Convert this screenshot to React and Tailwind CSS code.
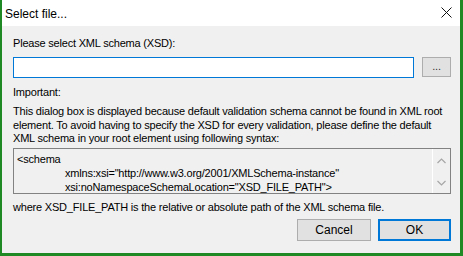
import React from "react";

export default function App() {
  return (
    <div
      className="w-[463px] h-[256px] flex flex-col bg-[#1f8a24] pl-[2px] pr-[3px] pb-[3px] text-[11px] text-black overflow-hidden tracking-[-0.2px]"
      style={{ fontFamily: '"Liberation Sans", Arial, sans-serif' }}
    >
      {/* title bar */}
      <div className="h-[26px] bg-white flex items-center justify-between pl-[3px] pr-[8px] shrink-0">
        <span className="text-[12px] leading-none pt-[1px] tracking-normal">Select file...</span>
        <svg width="11" height="11" viewBox="0 0 11 11" className="mb-[1px]">
          <path d="M0.5 0.5 L10.5 10.5 M10.5 0.5 L0.5 10.5" stroke="#111" strokeWidth="1" fill="none" />
        </svg>
      </div>

      {/* body */}
      <div className="flex-1 bg-[#f0f0f0] pl-[11px] pr-[9px] pt-[10px] flex flex-col whitespace-nowrap">
        <div className="leading-[15px]">Please select XML schema (XSD):</div>

        <div className="flex items-start gap-[8px] mt-[6px]">
          <div className="h-[21px] w-[402px] bg-white border border-[#0078d7]" />
          <button className="h-[20px] w-[29px] bg-[#e1e1e1] border border-[#adadad] text-[11px] leading-none pb-[2px] text-[#333]">
            ...
          </button>
        </div>

        <div className="leading-[14px] mt-[7px]">Important:</div>

        <p className="leading-[13.5px] mt-[6px]">
          This dialog box is displayed because default validation schema cannot be found in XML root
          <br />
          element. To avoid having to specify the XSD for every validation, please define the default
          <br />
          XML schema in your root element using following syntax:
        </p>

        <div className="mt-[2px] h-[46px] border border-[#828282] flex overflow-hidden">
          <div className="flex-1 pl-[3px] pt-[3px] leading-[14px] whitespace-pre overflow-hidden">
            <div>{"<schema"}</div>
            <div className="pl-[48px]">{'xmlns:xsi="http://www.w3.org/2001/XMLSchema-instance"'}</div>
            <div className="pl-[48px]">{'xsi:noNamespaceSchemaLocation="XSD_FILE_PATH">'}</div>
          </div>
          <div className="w-[18px] border-l border-white flex flex-col items-center justify-between pt-[9px] pb-[7px]">
            <svg width="9" height="6" viewBox="0 0 9 6">
              <path d="M0.5 5 L4.5 1 L8.5 5" stroke="#a6a6a6" strokeWidth="1.2" fill="none" />
            </svg>
            <svg width="9" height="6" viewBox="0 0 9 6">
              <path d="M0.5 1 L4.5 5 L8.5 1" stroke="#a6a6a6" strokeWidth="1.2" fill="none" />
            </svg>
          </div>
        </div>

        <div className="leading-[14px] mt-[6px]">
          where XSD_FILE_PATH is the relative or absolute path of the XML schema file.
        </div>

        <div className="flex justify-end gap-[7px] mt-[5px]">
          <button className="w-[74px] h-[22px] bg-[#e1e1e1] border border-[#adadad] leading-none text-[12px] tracking-normal">
            Cancel
          </button>
          <button className="w-[73px] h-[22px] bg-[#e1e1e1] border-2 border-[#0078d7] leading-none text-[12px] tracking-normal">
            OK
          </button>
        </div>
      </div>
    </div>
  );
}
